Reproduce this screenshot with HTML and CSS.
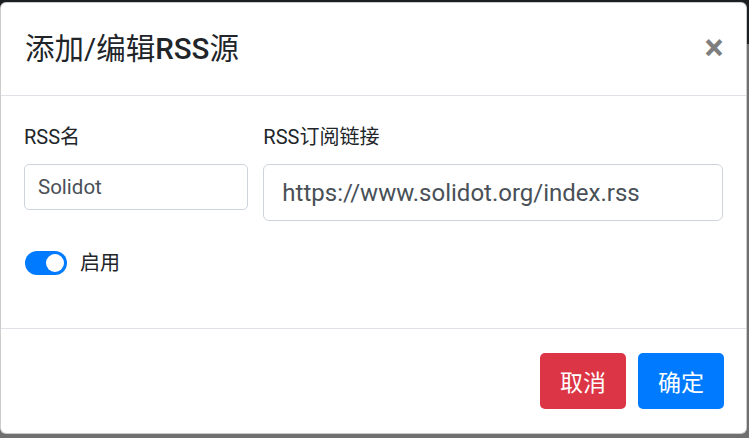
FILE: index.html
```html
<!DOCTYPE html>
<html lang="zh-CN">
<head>
<meta charset="utf-8">
<title>添加/编辑RSS源</title>
<link rel="stylesheet" href="styles.css">
</head>
<body>
<div class="modal">
  <div class="modal-header">
    <h5 class="modal-title">添加/编辑<span class="latin">RSS</span>源</h5>
    <button class="close" type="button">×</button>
  </div>
  <div class="modal-body">
    <div class="fields">
      <div class="field field-name">
        <label class="label">RSS名</label>
        <div class="input input-sm">Solidot</div>
      </div>
      <div class="field field-url">
        <label class="label">RSS订阅链接</label>
        <div class="input input-lg">https://www.solidot.org/index.rss</div>
      </div>
    </div>
    <div class="switch-row">
      <span class="switch"><span class="knob"></span></span>
      <span class="switch-label">启用</span>
    </div>
  </div>
  <div class="modal-footer">
    <button class="btn btn-danger" type="button">取消</button>
    <button class="btn btn-primary" type="button">确定</button>
  </div>
</div>
</body>
</html>
```

FILE: styles.css
```css
* { box-sizing: border-box; }
html, body { margin: 0; padding: 0; }
body {
  width: 749px;
  height: 438px;
  overflow: hidden;
  background: linear-gradient(to bottom, #1c1f22 0, #1c1f22 44px, #707070 44px, #707070 100%);
  font-family: Roboto, "Noto Sans CJK SC", sans-serif;
  color: #212529;
  padding-top: 2px;
}
.modal {
  width: 747px;
  height: 432px;
  background: #fff;
  border: 1px solid rgba(0,0,0,.2);
  border-radius: 6px;
  display: flex;
  flex-direction: column;
  overflow: hidden;
}
.modal-header {
  height: 93px;
  border-bottom: 1px solid #dee2e6;
  display: flex;
  align-items: center;
  justify-content: space-between;
  padding: 0 17px 0 24px;
  flex: none;
}
.modal-title {
  margin: 0;
  font-size: 29.5px;
  font-weight: 400;
  line-height: 1.5;
  color: #212529;
}
.modal-title .latin { font-weight: 500; }
.close {
  border: 0;
  background: transparent;
  padding: 0;
  font-family: Roboto, sans-serif;
  font-size: 36px;
  font-weight: 700;
  line-height: 1;
  color: #000;
  opacity: .5;
  width: 30px;
  height: 36px;
  margin-bottom: 2px;
}
.modal-body {
  flex: 1;
  padding: 27px 23px 0 23px;
}
.fields {
  display: flex;
  gap: 15px;
  align-items: flex-start;
}
.field { display: flex; flex-direction: column; }
.field-name { width: 225px; }
.field-url { width: 461px; }
.label {
  font-size: 20px;
  line-height: 28px;
  margin-bottom: 13px;
}
.input {
  border: 1px solid #ced4da;
  background: #fff;
  color: #495057;
  display: flex;
  align-items: center;
}
.input-sm {
  height: 46px;
  border-radius: 5px;
  font-size: 20.5px;
  padding: 0 13px;
}
.input-lg {
  height: 57px;
  border-radius: 6px;
  font-size: 24px;
  padding: 0 18px;
}
.switch-row {
  display: flex;
  align-items: center;
  margin-top: 30px;
  gap: 13px;
  padding-left: 1px;
}
.switch {
  width: 42px;
  height: 24px;
  border-radius: 12px;
  background: #007bff;
  display: flex;
  align-items: center;
  justify-content: flex-end;
  padding-right: 3px;
}
.knob {
  width: 18px;
  height: 18px;
  border-radius: 50%;
  background: #fff;
}
.switch-label {
  font-size: 20px;
  line-height: 24px;
}
.modal-footer {
  height: 105px;
  border-top: 1px solid #dee2e6;
  display: flex;
  align-items: center;
  justify-content: flex-end;
  gap: 12px;
  padding: 0 22px 0 0;
  flex: none;
}
.btn {
  width: 86px;
  height: 56px;
  border: 0;
  border-radius: 5px;
  color: #fff;
  font-family: Roboto, "Noto Sans CJK SC", sans-serif;
  font-size: 23px;
  padding: 0;
}
.btn-danger { background: #dc3545; }
.btn-primary { background: #007bff; }
```
